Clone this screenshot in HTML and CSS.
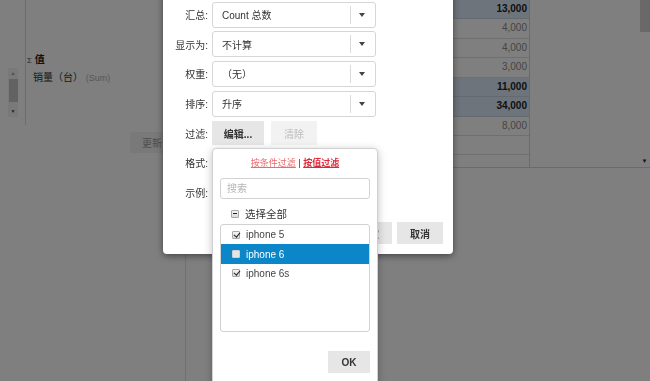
FILE: index.html
```html
<!DOCTYPE html>
<html lang="zh-CN">
<head>
  <meta charset="UTF-8">
  <meta name="viewport" content="width=device-width, initial-scale=1.0">
  <title>数据透视表 - 字段设置</title>
  <link rel="stylesheet" href="styles.css">
</head>
<body>
  <div class="app">
    <aside class="fields">
      <div class="field-panel">
        <div class="mini-scroll">
          <span class="ms-up">▲</span>
          <span class="ms-thumb"></span>
          <span class="ms-down">▼</span>
        </div>
        <div class="field-list">
          <div class="values-title"><span class="sigma">Σ</span> 值</div>
          <div class="value-item">销量（台） <span class="agg">(Sum)</span></div>
        </div>
      </div>
      <button class="btn-update">更新</button>
    </aside>

    <main class="grid-area">
      <div class="grid-scroll">
        <div class="grid">
          <div class="grid-row total">13,000</div>
          <div class="grid-row">4,000</div>
          <div class="grid-row">4,000</div>
          <div class="grid-row">3,000</div>
          <div class="grid-row total">11,000</div>
          <div class="grid-row total">34,000</div>
          <div class="grid-row">8,000</div>
          <div class="grid-row"></div>
          <div class="grid-row"></div>
        </div>
        <div class="grid-blank"></div>
        <div class="vscroll">
          <span class="vs-thumb"></span>
          <span class="vs-arrow">▼</span>
        </div>
      </div>
    </main>
  </div>

  <div class="overlay"></div>

  <div class="dialog">
    <div class="form-row">
      <label>汇总:</label>
      <div class="select"><span class="select-text">Count 总数</span><span class="select-arrow"></span></div>
    </div>
    <div class="form-row">
      <label>显示为:</label>
      <div class="select"><span class="select-text">不计算</span><span class="select-arrow"></span></div>
    </div>
    <div class="form-row">
      <label>权重:</label>
      <div class="select"><span class="select-text">（无）</span><span class="select-arrow"></span></div>
    </div>
    <div class="form-row">
      <label>排序:</label>
      <div class="select"><span class="select-text">升序</span><span class="select-arrow"></span></div>
    </div>
    <div class="form-row">
      <label>过滤:</label>
      <div class="filter-buttons">
        <button class="btn btn-edit">编辑...</button>
        <button class="btn btn-clear" disabled>清除</button>
      </div>
    </div>
    <div class="form-row">
      <label>格式:</label>
    </div>
    <div class="form-row">
      <label>示例:</label>
    </div>
    <div class="dialog-footer">
      <button class="btn">确定</button>
      <button class="btn">取消</button>
    </div>
  </div>

  <div class="filter-pop">
    <div class="filter-modes">
      <a href="#" class="mode">按条件过滤</a> | <a href="#" class="mode active">按值过滤</a>
    </div>
    <div class="search">搜索</div>
    <div class="select-all"><span class="cb cb-minus"></span>选择全部</div>
    <div class="item-list">
      <div class="item"><span class="cb cb-checked"></span>iphone 5</div>
      <div class="item selected"><span class="cb"></span>iphone 6</div>
      <div class="item"><span class="cb cb-checked"></span>iphone 6s</div>
    </div>
    <div class="pop-footer">
      <button class="btn btn-ok">OK</button>
    </div>
  </div>
</body>
</html>
```

FILE: styles.css
```css
* {
  box-sizing: border-box;
}
body {
  margin: 0;
  width: 650px;
  height: 381px;
  overflow: hidden;
  font-family: 'Liberation Sans', 'Noto Sans CJK SC', sans-serif;
  font-size: 10px;
  color: #333;
  background: #ffffff;
}
button {
  font-family: inherit;
  font-size: 10px;
  border: none;
  cursor: pointer;
}

/* background page */
.app {
  display: flex;
  height: 381px;
}
.fields {
  width: 186px;
  border-right: 1px solid #e2e2e2;
  display: flex;
  flex-direction: column;
}
.field-panel {
  display: flex;
  height: 125px;
}
.mini-scroll {
  margin: 68px 0 0 8px;
  width: 10px;
  height: 49px;
  background: #f2f2f2;
  display: flex;
  flex-direction: column;
  align-items: center;
  font-size: 5px;
  color: #444;
}
.ms-up {
  height: 11px;
  line-height: 11px;
  color: #999;
}
.ms-thumb {
  width: 9px;
  height: 23px;
  background: #c4c4c4;
}
.ms-down {
  margin-top: 4px;
  line-height: 10px;
}
.field-list {
  margin-left: 7px;
  border-left: 1px solid #d8d8d8;
  padding: 54px 0 0 1px;
  flex: 1;
}
.values-title {
  font-weight: bold;
  color: #222;
  line-height: 12px;
}
.sigma {
  font-size: 8px;
  font-weight: normal;
  color: #555;
}
.value-item {
  margin: 5px 0 0 6px;
  line-height: 12px;
}
.agg {
  font-size: 9px;
  color: #b0b0b0;
}
.btn-update {
  margin: 7px 0 0 130px;
  width: 44px;
  height: 21px;
  background: #f2f2f2;
  color: #999;
}
.grid-area {
  flex: 1;
}
.grid-scroll {
  display: flex;
  height: 168px;
  border-bottom: 1px solid #d6d6d6;
}
.grid {
  width: 344px;
  border-right: 1px solid #d6d6d6;
  overflow: hidden;
}
.grid-row {
  height: 19.43px;
  border-bottom: 1px solid #dedede;
  text-align: right;
  padding-right: 2px;
  line-height: 18.4px;
  color: #8a8a8a;
}
.grid-row.total {
  background: #dbe9f6;
  color: #222;
  font-weight: bold;
  border-bottom-color: #c8d4de;
}
.grid-blank {
  flex: 1;
}
.vscroll {
  width: 11px;
  display: flex;
  flex-direction: column;
  align-items: center;
}
.vs-thumb {
  width: 10px;
  height: 32px;
  background: #d2d2d2;
}
.vs-arrow {
  margin-top: auto;
  margin-bottom: 3px;
  font-size: 6px;
  color: #222;
}

.overlay {
  position: fixed;
  inset: 0;
  background: rgba(0, 0, 0, 0.5);
}

/* field settings dialog */
.dialog {
  position: absolute;
  left: 163px;
  top: -12px;
  width: 290px;
  padding: 12px 10px 10px 0;
  background: #ffffff;
  border-radius: 4px;
  box-shadow: 0 2px 7px rgba(0, 0, 0, 0.45);
}
.form-row {
  display: flex;
  align-items: center;
  height: 29.6px;
}
.form-row label {
  width: 46px;
  padding-right: 1px;
  text-align: right;
  margin-right: 3px;
}
.select {
  width: 164px;
  height: 26px;
  border: 1px solid #d6d6d6;
  border-radius: 3px;
  display: flex;
  align-items: center;
}
.select-text {
  flex: 1;
  padding-left: 9px;
}
.select-arrow {
  width: 25px;
  height: 18px;
  border-left: 1px solid #dadada;
  position: relative;
}
.select-arrow::after {
  content: "";
  position: absolute;
  left: 8px;
  top: 7px;
  border-left: 3.5px solid transparent;
  border-right: 3.5px solid transparent;
  border-top: 4px solid #444;
}
.filter-buttons {
  display: flex;
  gap: 7px;
}
.btn {
  width: 46px;
  height: 22.5px;
  background: #e6e6e6;
  color: #333;
  font-weight: bold;
  padding: 0;
}
.btn-edit {
  width: 52px;
  height: 24px;
}
.btn-clear {
  height: 24px;
  background: #f2f2f2;
  color: #bbb;
  font-weight: normal;
}
.dialog-footer {
  margin-top: 14.6px;
  display: flex;
  justify-content: flex-end;
  gap: 5px;
}

/* filter dropdown */
.filter-pop {
  position: absolute;
  left: 212px;
  top: 148px;
  width: 166px;
  height: 245px;
  padding: 8px 7px;
  background: #ffffff;
  border: 1px solid #d0d0d0;
  border-radius: 4px;
  box-shadow: 0 2px 8px rgba(0, 0, 0, 0.25);
}
.filter-modes {
  text-align: center;
  line-height: 12px;
  font-size: 9px;
}
.mode {
  color: #ec6a6a;
}
.mode.active {
  color: #e0283a;
  font-weight: bold;
}
.search {
  margin-top: 9px;
  height: 21px;
  border: 1px solid #d2d2d2;
  border-radius: 3px;
  padding-left: 6px;
  line-height: 19px;
  color: #b5b5b5;
}
.select-all {
  margin-top: 4px;
  height: 21px;
  display: flex;
  align-items: center;
  padding-left: 11px;
  font-size: 10.5px;
}
.cb {
  width: 8px;
  height: 8px;
  margin-right: 6px;
  border: 1px solid #a8a8a8;
  border-radius: 1px;
  background: linear-gradient(#f4f4f4, #dcdcdc);
  position: relative;
  flex: none;
}
.cb-checked::after {
  content: "";
  position: absolute;
  left: 2px;
  top: -1px;
  width: 2.5px;
  height: 5px;
  border-right: 1.6px solid #222;
  border-bottom: 1.6px solid #222;
  transform: rotate(40deg);
}
.cb-minus::after {
  content: "";
  position: absolute;
  left: 1px;
  top: 2.5px;
  width: 4px;
  height: 1.4px;
  background: #222;
}
.item-list {
  height: 108px;
  border: 1px solid #d2d2d2;
  border-radius: 3px;
}
.item {
  height: 19.4px;
  display: flex;
  align-items: center;
  padding-left: 11px;
  color: #444;
}
.item.selected {
  background: #0a86c9;
  color: #ffffff;
}
.item.selected .cb {
  border-color: #d0d0d0;
  background: #e4e4e4;
}
.pop-footer {
  margin-top: 19px;
  text-align: right;
}
.btn-ok {
  width: 42px;
  height: 22px;
}
```
